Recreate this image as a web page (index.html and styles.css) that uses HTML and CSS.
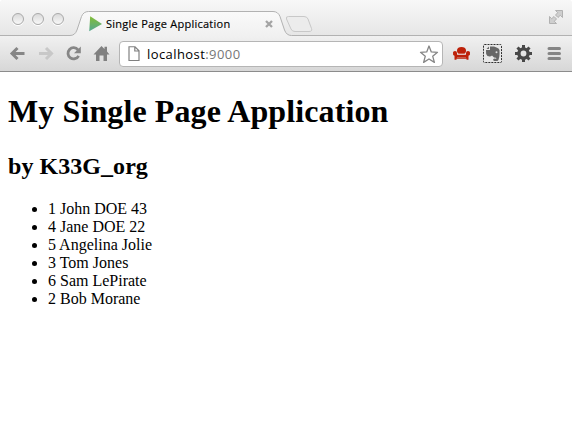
FILE: index.html
```html
<!DOCTYPE html>
<html lang="en">
<head>
<meta charset="utf-8">
<title>Single Page Application</title>
<link rel="stylesheet" href="styles.css">
</head>
<body>
<header class="chrome">
  <div class="tabstrip">
    <svg class="tab-shape" width="572" height="37" viewBox="0 0 572 37">
      <defs>
        <linearGradient id="tab" x1="0" y1="0" x2="0" y2="1"><stop offset="0" stop-color="#fafafa"/><stop offset="1" stop-color="#f0f0f0"/></linearGradient>
      </defs>
      <path d="M0 35.500H70Q75 35.500 77 30L81.500 16.500Q83.500 11.500 88.500 11.500H273Q278 11.500 280 16.500L284.500 30Q286.500 35.500 291.500 35.500H572V37H0Z" fill="url(#tab)"/>
      <path d="M0 35.500H70Q75 35.500 77 30L81.500 16.500Q83.500 11.500 88.500 11.500H273Q278 11.500 280 16.500L284.500 30Q286.500 35.500 291.500 35.500H572" fill="none" stroke="#b2b2b2"/>
      <path d="M288.500 16.500H304Q307 16.500 308 19L311.500 28.500Q312.500 31.500 309 31.500H295Q292 31.500 291 29L286.500 19Q285.500 16.500 288.500 16.500Z" fill="#ececec" stroke="#c8c8c8"/>
    </svg>
    <div class="lights"><i></i><i></i><i></i></div>
    <div class="tab">
      <svg class="favicon" width="16" height="16" viewBox="0 0 16 16">
        <defs><linearGradient id="play" x1="0" y1="0" x2="0" y2="1"><stop offset="0" stop-color="#83bd36"/><stop offset="1" stop-color="#54a890"/></linearGradient></defs>
        <path d="M2.200 .2L14 8L1.200 15.200Z" fill="url(#play)"/>
      </svg>
      <span class="tab-title">Single Page Application</span>
      <svg class="close" width="8" height="8" viewBox="0 0 8 8"><path d="M1 1L7 7M7 1L1 7" stroke="#a4a4a4" stroke-width="2.300"/></svg>
    </div>
    <svg class="expand" width="14" height="14" viewBox="0 0 14 14">
      <path d="M6.500 .5H13.500V7.500L11.300 5.300L9 7.500L6.500 5L8.700 2.700ZM.5 6.500L2.700 8.700L5 6.500L7.500 9L5.300 11.300L7.500 13.500H.5Z" fill="#cfcfcf" stroke="#ababab" stroke-width=".9"/>
    </svg>
  </div>
  <div class="toolbar">
    <svg class="nav" width="119" height="34" viewBox="0 0 119 34">
      <g fill="none" stroke-width="3">
        <path d="M24.500 16.500H12.500M17.500 11L12 16.500L17.500 22" stroke="#868686"/>
        <path d="M39 16.500H51M46 11L51.500 16.500L46 22" stroke="#c8c8c8"/>
        <path d="M78 12.800A5.600 5.600 0 1 0 78.600 18.800" stroke="#868686" stroke-width="2.800"/>
      </g>
      <path d="M80.800 9.500V16.300H74Z" fill="#868686"/>
      <path d="M101.500 9L104.500 12V9.800H107V14.400L109.500 17.500H107V24H103.500V18.500H99.500V24H96V17.500H93.500Z" fill="#808080"/>
    </svg>
    <div class="omnibox">
      <svg width="12" height="16" viewBox="0 0 12 16"><path d="M1 .75H7L11 4.800V14.500H1ZM6.800 .9V5H10.800" fill="#fff" stroke="#808080" stroke-width="1.200"/></svg>
      <span class="url">localhost<b>:9000</b></span>
      <svg class="star" width="20" height="19" viewBox="0 0 20 19"><path d="M10 1L12.300 6.900L18.500 7.300L13.700 11.200L15.400 17.400L10 14L4.600 17.400L6.300 11.200L1.500 7.300L7.700 6.900Z" fill="#fff" stroke="#858585" stroke-width="1.300" stroke-linejoin="round"/></svg>
    </div>
    <svg class="tools" width="128" height="34" viewBox="0 0 128 34">
      <g fill="#bd2109">
        <path d="M13 13Q13.500 10 17.500 10Q21.500 10 22 13Q22.500 15 20.500 17H14.500Q12.500 15 13 13Z"/>
        <rect x="12.500" y="17.700" width="10" height="3"/>
        <path d="M9 15.500Q9 14 11 14Q13 14 13 16V21H22V16Q22 14 24 14Q26 14 26 15.500Q26.500 18 24.500 18.700V22.700H22.500V21.700H12.500V22.700H10.500V18.700Q8.500 18 9 15.500Z"/>
      </g>
      <path d="M13.500 17.100H21.500" stroke="#ead3cf" stroke-width=".9"/>
      <rect x="39.500" y="7.500" width="18" height="18" rx="1" fill="#e8e8e8" stroke="#303030" stroke-dasharray="2 1"/>
      <path d="M46 9.500V13H42Q41.500 17 43.500 19Q46.500 20 48 18.500L50 20.500Q52.500 20.500 52.500 21.800Q52 22 50.500 21.600Q48 22.500 50 24H53.500Q56 22 55.500 13Q55 11 52.500 10.500L50 9.500Z" fill="#666"/>
      <path d="M42.500 12L45 9.500V12Z" fill="#666"/><circle cx="52.500" cy="15.200" r="1" fill="#ddd"/>
      <g stroke="#484848" fill="none">
        <circle cx="79.500" cy="16.500" r="4.600" stroke-width="3.400"/>
        <path d="M79.500 8V11M79.500 22V25M71 16.500H74M85 16.500H88M73.500 10.500L75.600 12.600M83.400 20.400L85.500 22.500M73.500 22.500L75.600 20.400M83.400 12.600L85.500 10.500" stroke-width="3"/>
      </g>
      <path d="M105 11.500H115.500M105 16.500H115.500M105 21.500H115.500" stroke="#858585" stroke-width="3" stroke-linecap="round"/>
    </svg>
  </div>
</header>
<main>
  <h1>My Single Page Application</h1>
  <h2>by K33G_org</h2>
  <ul>
    <li>1 John DOE 43</li>
    <li>4 Jane DOE 22</li>
    <li>5 Angelina Jolie</li>
    <li>3 Tom Jones</li>
    <li>6 Sam LePirate</li>
    <li>2 Bob Morane</li>
  </ul>
</main>
</body>
</html>
```
FILE: styles.css
```css
* { box-sizing: border-box; }
body { margin: 0; background: #fff; color: #000; overflow: hidden; }
svg { display: block; flex: none; }
.chrome { height: 72px; font-family: "Open Sans", sans-serif; background: #eee; border-bottom: 1px solid #8c8c8c; border-radius: 4px 4px 0 0; overflow: hidden; }
.tabstrip { position: relative; height: 37px; display: flex; background: linear-gradient(#f8f8f8, #e5e5e5); }
.tab-shape { position: absolute; left: 0; top: 0; }
.lights { position: relative; display: flex; gap: 8px; padding: 13px 0 0 12px; width: 88px; }
.lights i { width: 12px; height: 12px; border: 1px solid #a9a9a9; border-radius: 50%; background: linear-gradient(#dadada, #f8f8f8); box-shadow: 0 1px 0 #fff; }
.tab { position: relative; width: 188px; display: flex; align-items: center; height: 24px; margin-top: 12px; }
.tab-title { width: 161px; padding-left: 2px; font-size: 11px; line-height: 16px; white-space: nowrap; letter-spacing: .26px; -webkit-text-stroke: .15px #000; }
.expand { position: relative; margin: 10px 9px 0 auto; }
.toolbar { height: 34px; display: flex; background: linear-gradient(#f0f0f0, #d7d7d7); }
.omnibox { width: 324px; height: 26px; margin-top: 4px; border: 1px solid #b5b5b5; border-radius: 4px; background: #fff; display: flex; align-items: center; padding: 0 3px 0 8px; }
.url { margin-left: 7px; font-size: 13px; line-height: 20px; letter-spacing: .42px; padding-bottom: 1px; }
.url b { font-weight: 400; color: #777; }
.star { margin-left: auto; }
.tools { margin-left: 1px; }
main { padding: 0 8px; font-family: "Liberation Serif", serif; font-size: 16px; }
h1 { margin: 21px 0 0; font-size: 32px; line-height: 37px; letter-spacing: .1px; }
h2 { margin: 22px 0 0; font-size: 24px; line-height: 28px; letter-spacing: .05px; }
ul { margin: 20px 0 0; padding-left: 40px; line-height: 18px; }
```
